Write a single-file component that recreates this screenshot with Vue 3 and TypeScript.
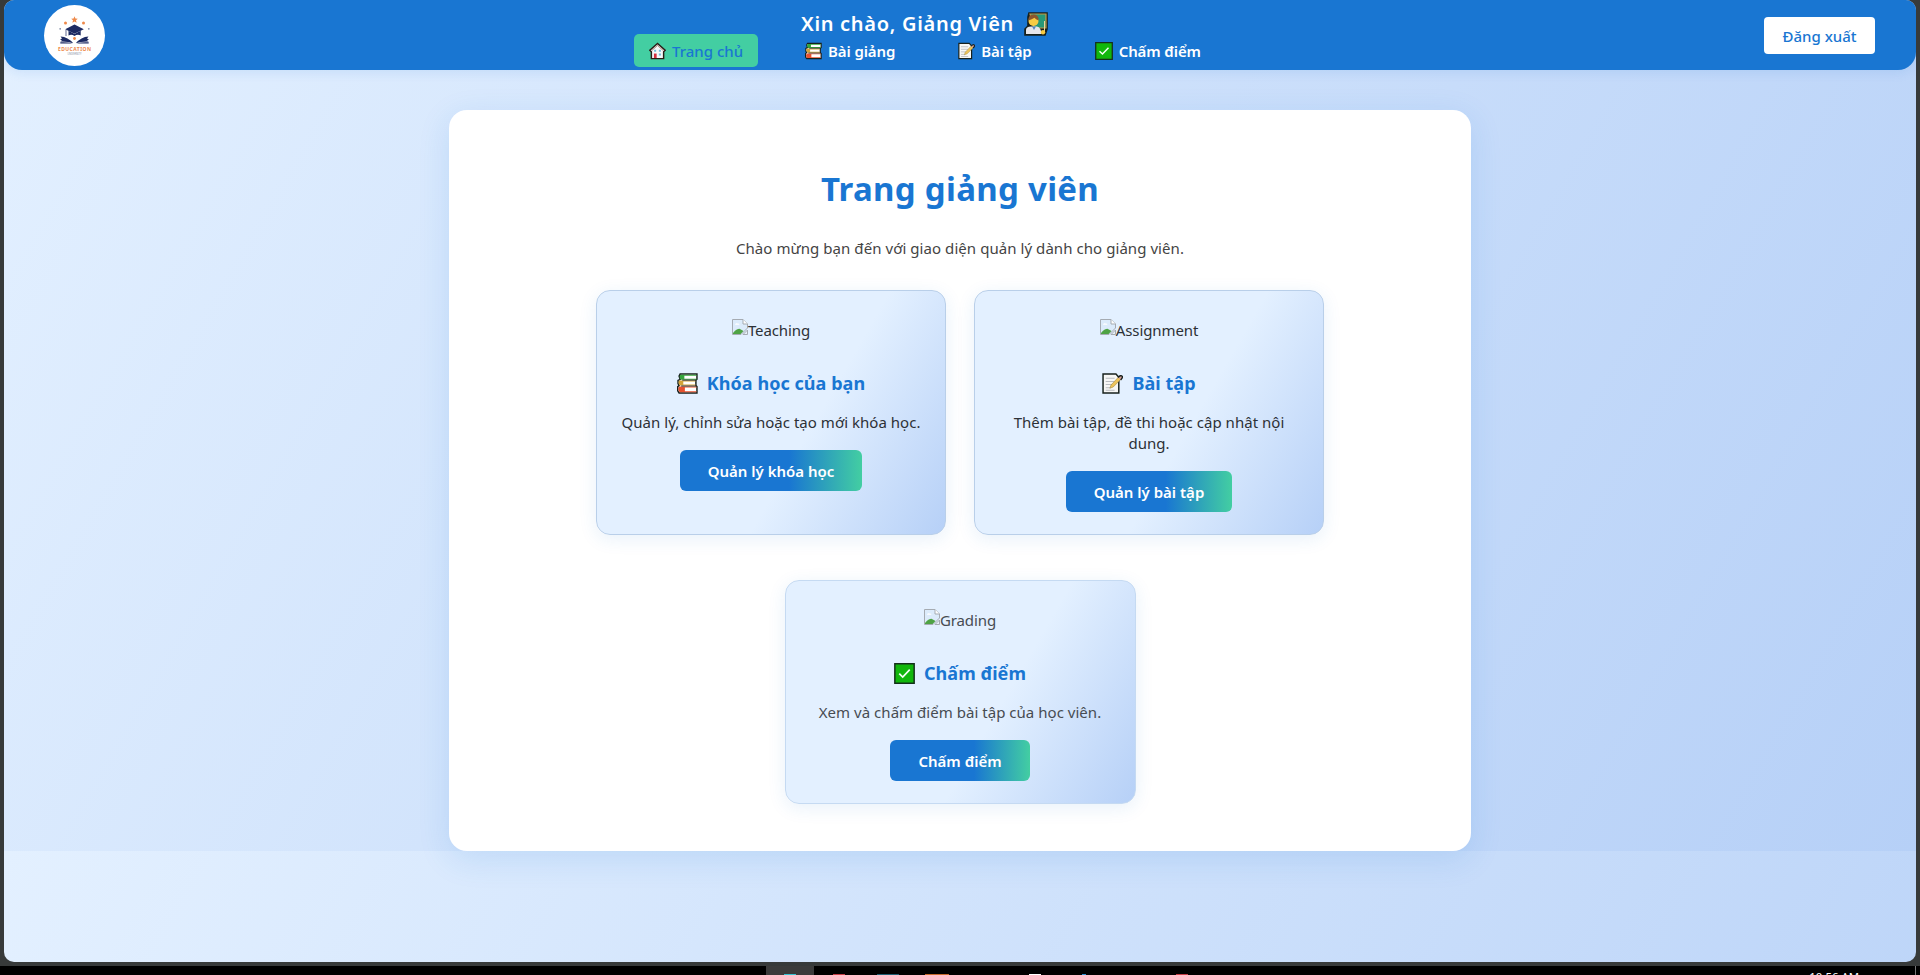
<script setup lang="ts">
type IconName = 'house' | 'books' | 'memo' | 'check' | 'teacher' | 'broken'

interface NavItem { label: string; icon: IconName; active: boolean; key: string }
interface Feature { key: string; alt: string; icon: IconName; title: string; text: string; action: string }

const nav: NavItem[] = [
  { label: 'Trang chủ', icon: 'house', active: true, key: 'home' },
  { label: 'Bài giảng', icon: 'books', active: false, key: 'lessons' },
  { label: 'Bài tập', icon: 'memo', active: false, key: 'tasks' },
  { label: 'Chấm điểm', icon: 'check', active: false, key: 'marks' },
]

const features: Feature[] = [
  { key: 'teaching', alt: 'Teaching', icon: 'books', title: 'Khóa học của bạn', text: 'Quản lý, chỉnh sửa hoặc tạo mới khóa học.', action: 'Quản lý khóa học' },
  { key: 'assignment', alt: 'Assignment', icon: 'memo', title: 'Bài tập', text: 'Thêm bài tập, đề thi hoặc cập nhật nội dung.', action: 'Quản lý bài tập' },
  { key: 'grading', alt: 'Grading', icon: 'check', title: 'Chấm điểm', text: 'Xem và chấm điểm bài tập của học viên.', action: 'Chấm điểm' },
]
</script>

<template>
  <svg class="defs" width="0" height="0" aria-hidden="true">
    <symbol id="house" viewBox="0 0 20 20">
      <path d="M10 1.2L1 9.2L2.8 11V19H17.2V11L19 9.2Z" fill="#f5f8fa" stroke="#2a1c16" stroke-width="1.7" />
      <path d="M10 3.4L3.4 9.4M10 3.4L16.6 9.4" stroke="#8d4a33" stroke-width=".8" />
      <path d="M6 8.4h2.4v2.4H6zM11.6 8.4h2.4v2.4h-2.4zM11.6 13h2.4v2.4h-2.4z" fill="#6fbdd6" />
      <path d="M5.8 13h3.2v5.2H5.8z" fill="#d2303f" />
    </symbol>
    <symbol id="books" viewBox="0 0 20 20">
      <path d="M3 1H19V6L18 7V12L19 13V19H2L.7 17V13L2 12L1 10V7L3 6L2 3Z" fill="#fff" stroke="#17201c" stroke-width="1.4" />
      <path d="M3 1.7H18.5V2.6H7V5.4H18.5V6.4H3.5Q1.5 4 3 1.7Z" fill="#35a63c" />
      <path d="M2 7.2H17.5V8.2H6V11H17.5V12H2.7Q.6 9.5 2 7.2Z" fill="#d3a337" />
      <path d="M2 12.9H18.5V13.8H7.5V17.4H18.5V18.3H2.5Q.2 15.5 2 12.9Z" fill="#e7522f" />
      <path d="M5 6.8H18M4 12.4H18" stroke="#222" stroke-width=".9" />
    </symbol>
    <symbol id="memo" viewBox="0 0 20 20">
      <path d="M1 1H13.3L16 4V19H1Z" fill="#f7f7f5" stroke="#17201c" stroke-width="1.4" />
      <path d="M3.5 5H12M3.5 8H12M3.5 11H10M3.5 14H8M3.5 16.5H12" stroke="#b9bcc0" stroke-width="1" />
      <path d="M7.5 14.5L8.6 11.4L15.8 3.8L18 6L10.7 13.3Z" fill="#edc45c" stroke="#a78c42" stroke-width=".6" />
      <path d="M15.3 4.2Q18 1.5 19.3 3.2Q20 4.6 17.7 6.6" fill="#d9a29a" stroke="#17201c" stroke-width="1.3" />
    </symbol>
    <symbol id="check" viewBox="0 0 20 20">
      <path d="M.8.8H19.2V19.2H.8Z" fill="#11b70c" stroke="#14301a" stroke-width="1.4" />
      <path d="M5 10.2L8.3 13.4L15 6.3" fill="none" stroke="#f4fff4" stroke-width="1.6" />
    </symbol>
    <symbol id="teacher" viewBox="0 0 24 24">
      <path d="M5 1H23V17L21 23H1V17L4 14V5Z" fill="#17201c" stroke="#17201c" stroke-width="1.6" />
      <path d="M6 2H22V16H10Z" fill="#279878" stroke="#c29a4b" stroke-width="1.2" />
      <path d="M2 22V18Q2 14.5 7 14.5H13Q17 15 17.5 22Z" fill="#e5e6ec" />
      <path d="M8 14.5L10 18L12 14.5Z" fill="#5684bd" />
      <circle cx="9.5" cy="9" r="5" fill="#f8cb43" />
      <path d="M4.4 8.5Q4 2.3 10 2.5Q15 2.8 14.6 8.5Q11.5 7.5 10.5 5.8Q8 7.6 4.4 8.5Z" fill="#8b562d" />
      <path d="M20.5 9V20" stroke="#e7d6a1" stroke-width="1" />
      <circle cx="19" cy="20.2" r="2.2" fill="#f8cb43" />
    </symbol>
    <symbol id="broken" viewBox="0 0 16 16">
      <path d="M.5.5H11L15.5 5V9L9 15.5H.5Z" fill="#dcebfb" stroke="#a5abb2" />
      <path d="M11 .5V5H15.5" fill="#fff" stroke="#a5abb2" />
      <path d="M1 15V14Q4.5 9.8 7.5 9.8L11.5 12L8.6 15Z" fill="#4fa345" />
      <path d="M3 5.5Q4 3.5 5.5 4.5Q7 4 7.5 5.8H3Z" fill="#fff" />
      <path d="M15.5 11V15.5H11Z" fill="#e8f1f9" stroke="#a5abb2" />
    </symbol>
  </svg>

  <div class="screen">
    <div class="window">
      <header class="topbar">
        <div class="logo">
          <svg viewBox="0 0 61 61">
            <g fill="#ee8a4b">
              <path d="M30.5 11.3L31.4 13.6L33.8 13.8L32 15.3L32.6 17.8L30.5 16.4L28.4 17.8L29 15.3L27.2 13.8L29.6 13.6Z" />
              <circle cx="21.5" cy="18" r="1.5" /><circle cx="39.5" cy="18" r="1.5" />
              <circle cx="30.5" cy="33.5" r="1.4" />
            </g>
            <g fill="#7f8aa5"><circle cx="16.2" cy="23.8" r=".9" /><circle cx="44.8" cy="23.8" r=".9" /></g>
            <g fill="#1c2a62">
              <path d="M30.5 19.5L39.8 24.2L30.5 28.8L21.2 24.2Z" />
              <path d="M24.5 25.8V30.5Q27.5 29 30.5 31Q33.5 29 36.7 30.5V25.8L30.5 29Z" />
              <path d="M16.5 31.5Q24 32 29.2 38.3Q24 36.4 16.3 36.6L18 35.2L16 34.6L18 33.5Z" />
              <path d="M44.5 31.5Q37 32 31.8 38.3Q37 36.4 44.7 36.6L43 35.2L45 34.6L43 33.5Z" />
              <path d="M16.3 37.3Q23 36.8 28.4 38.5H16.3ZM44.7 37.3Q38 36.8 32.6 38.5H44.7Z" />
            </g>
            <path d="M22 25V31" stroke="#1c2a62" stroke-width=".7" />
            <text x="30.5" y="45.6" class="logo-name" textLength="33">EDUCATION</text>
            <text x="30.5" y="49.6" class="logo-sub" textLength="14">UNIVERSITY</text>
          </svg>
        </div>
        <div class="middle">
          <div class="greeting"><span>Xin chào, Giảng Viên</span><svg><use href="#teacher" /></svg></div>
          <nav>
            <a v-for="n in nav" :key="n.key" :class="[n.key, { active: n.active }]">
              <svg><use :href="'#' + n.icon" /></svg><span>{{ n.label }}</span>
            </a>
          </nav>
        </div>
        <button class="logout">Đăng xuất</button>
      </header>

      <main class="panel">
        <h1>Trang giảng viên</h1>
        <p class="intro">Chào mừng bạn đến với giao diện quản lý dành cho giảng viên.</p>
        <section class="cards">
          <article v-for="f in features" :key="f.key" class="card" :class="f.key">
            <div class="picture"><svg><use href="#broken" /></svg><span>{{ f.alt }}</span></div>
            <h2><svg><use :href="'#' + f.icon" /></svg><span>{{ f.title }}</span></h2>
            <p>{{ f.text }}</p>
            <button class="action">{{ f.action }}</button>
          </article>
        </section>
      </main>
    </div>
    <footer class="taskbar">
      <div class="apps">
        <i class="app current"><b class="cyan"></b></i>
        <i class="app"><b class="red"></b></i>
        <i class="app"><b class="teal"></b></i>
        <i class="app"><b class="orange"></b></i>
        <i class="app"></i>
        <i class="app"><b class="white"></b></i>
        <i class="app"><b class="blue"></b></i>
        <i class="app"></i>
        <i class="app"><b class="red"></b></i>
      </div>
      <span class="clock">10:56 AM</span>
      <i class="edge"></i>
    </footer>
  </div>
</template>

<style>
body { margin: 0; overflow: hidden; background: #000; }
</style>

<style scoped>
* { box-sizing: border-box; }
.defs { position: absolute; }
.screen { width: 1920px; height: 975px; overflow: hidden; background: #373a3a; font-family: "Noto Sans", "Open Sans", sans-serif; font-size: 15px; color: #2d3136; }
.window { width: 1912px; height: 962px; margin: 0 4px; overflow: hidden; border-radius: 10px; background: linear-gradient(120deg, #e3f0ff 0%, #b6d0f7 100%) 0 0 / 100% 851px; }
.topbar { display: flex; align-items: flex-start; height: 70px; padding: 0 41px 0 40px; background: #1976d2; border-radius: 0 0 18px 18px; box-shadow: 0 2px 12px rgba(25, 118, 210, .12); color: #fff; }
.logo { flex: none; width: 61px; height: 61px; margin-top: 4.5px; border-radius: 50%; background: #fff; }
.logo svg { display: block; width: 61px; height: 61px; }
.logo-name { font: 700 5px "Noto Sans", sans-serif; fill: #ee8a4b; text-anchor: middle; }
.logo-sub { font: 2.6px "Noto Sans", sans-serif; fill: #8c93a6; text-anchor: middle; }
.middle { flex: none; width: 584px; margin-left: 529px; }
.greeting { display: flex; align-items: center; justify-content: center; height: 34px; padding: 13px 3px 0 0; font-size: 20px; font-weight: 600; letter-spacing: .7px; white-space: nowrap; }
.greeting svg { width: 24px; height: 24px; margin-left: 10px; }
nav { display: flex; gap: 33px; height: 33px; }
nav a { display: flex; align-items: center; height: 33px; padding: 0 15px; border-radius: 5px; font-weight: 600; letter-spacing: -.1px; white-space: nowrap; }
nav svg { flex: none; width: 17px; height: 18px; margin-right: 6px; }
nav .marks svg { width: 18px; }
nav a.active { width: 124px; margin-right: -1px; background: #43cea2; color: #1976d2; font-weight: 500; letter-spacing: 0; }
.logout { width: 111px; height: 37px; margin: 17px 0 0 auto; padding: 0; border: 0; border-radius: 4px; background: #fff; color: #1976d2; font: 500 15px "Noto Sans", sans-serif; }
.panel { width: 1022px; height: 741px; margin: 40px auto 0; border-radius: 18px; background: #fff; box-shadow: 0 8px 32px rgba(25, 118, 210, .14); text-align: center; }
h1 { margin: 0; padding-top: 53px; height: 120px; font-size: 33px; line-height: 52px; color: #1976d2; letter-spacing: .3px; }
.intro { margin: 0; height: 60px; padding-top: 7px; line-height: 22px; color: #444; letter-spacing: .06px; }
.cards { display: flex; flex-wrap: wrap; justify-content: center; align-items: flex-start; gap: 45px 28px; }
.card { display: flex; flex-direction: column; align-items: center; width: 350px; height: 245px; border: 1px solid #b9cfe9; border-radius: 14px; background: linear-gradient(120deg, #e3f0ff 60%, #b6d0f7 100%); box-shadow: 0 4px 18px rgba(25, 118, 210, .1); }
.grading { width: 351px; height: 224px; border-color: #c5daf2; color: #474c52; }
.picture { display: flex; height: 66px; padding-top: 28px; line-height: 22px; }
.picture svg { width: 16px; height: 16px; }
.picture span { letter-spacing: -.1px; }
h2 { display: flex; align-items: center; height: 52px; margin: 0; font-size: 18px; letter-spacing: .05px; color: #1976d2; white-space: nowrap; }
h2 svg { width: 21px; height: 21px; margin-right: 9px; }
.card p { width: 302px; margin: 0; padding-top: 3px; line-height: 21px; letter-spacing: .03px; }
.action { height: 41px; margin-top: 17px; padding: 0 28px; border: 0; border-radius: 6px; background: linear-gradient(90deg, #1976d2 60%, #43cea2 100%); color: #fff; font: 600 15px "Noto Sans", sans-serif; white-space: nowrap; }
.taskbar { display: flex; justify-content: flex-end; height: 9px; margin-top: 4px; background: #000; overflow: hidden; }
.apps { display: flex; flex: 1; padding-left: 766px; }
.app { display: flex; flex: none; align-items: flex-end; justify-content: center; width: 48px; height: 9px; margin-right: 1px; }
.current { background: #3b3b3b; }
.app b { width: 12px; height: 1px; }
.cyan { background: #35c3d2; }
.red { background: #c43d45; }
.app .teal { width: 22px; background: #1d5e73; }
.app .orange { width: 24px; background: #c76a2b; }
.white { background: #fff; }
.app .blue { width: 4px; background: #2b8fd0; }
.clock { height: 16px; margin-top: 3px; color: #fff; font-size: 11.4px; line-height: 16px; white-space: nowrap; }
.edge { width: 1px; margin: 0 4px 0 56px; background: #777; }
</style>
